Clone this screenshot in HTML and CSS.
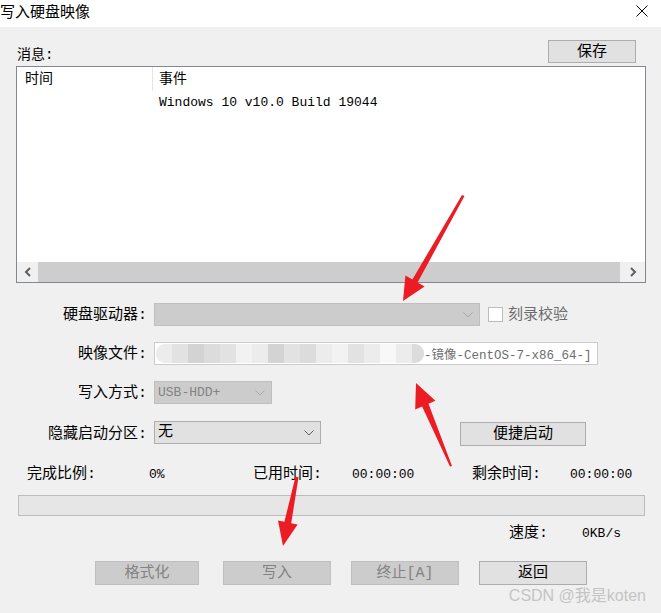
FILE: index.html
```html
<!DOCTYPE html>
<html lang="zh-CN">
<head>
<meta charset="utf-8">
<title>写入硬盘映像</title>
<link rel="stylesheet" href="styles.css">
</head>
<body>
<div class="window">
  <div class="titlebar">
    <span class="title">写入硬盘映像</span>
    <svg class="close" width="12" height="12" viewBox="0 0 12 12"><path d="M0.5 0.5 L11.5 11.5 M11.5 0.5 L0.5 11.5" stroke="#000" stroke-width="1" fill="none"/></svg>
  </div>

  <div class="msg-head">
    <span class="msg-label">消息:</span>
    <button class="btn">保存</button>
  </div>

  <div class="list">
    <div class="list-header">
      <div class="col col-time">时间</div>
      <div class="col col-event">事件</div>
    </div>
    <div class="list-body">
      <div class="list-row">
        <div class="cell-time"></div>
        <div class="cell-event mono">Windows 10 v10.0 Build 19044</div>
      </div>
    </div>
    <div class="hscroll">
      <div class="sb-btn sb-left"><svg width="8" height="10" viewBox="0 0 8 10"><path d="M6 1 L2 5 L6 9" stroke="#606060" stroke-width="2" fill="none"/></svg></div>
      <div class="sb-thumb"></div>
      <div class="sb-btn sb-right"><svg width="8" height="10" viewBox="0 0 8 10"><path d="M2 1 L6 5 L2 9" stroke="#606060" stroke-width="2" fill="none"/></svg></div>
    </div>
  </div>

  <div class="form">
    <div class="form-row">
      <label class="flabel">硬盘驱动器:</label>
      <div class="combo disabled w-drive">
        <span class="combo-text"></span>
        <svg class="chev" width="10" height="6" viewBox="0 0 10 6"><path d="M0.5 0.5 L5 5 L9.5 0.5" stroke="#a8a8a8" fill="none"/></svg>
      </div>
      <span class="checkbox"></span>
      <span class="check-label">刻录校验</span>
    </div>
    <div class="form-row">
      <label class="flabel">映像文件:</label>
      <div class="input">
        <div class="blur">
          <span class="b1"></span><span class="b2"></span><span class="b3"></span><span class="b4"></span><span class="b2"></span><span class="b5"></span><span class="b1"></span><span class="b3"></span><span class="b2"></span><span class="b4"></span><span class="b1"></span><span class="b5"></span><span class="b2"></span><span class="b1"></span><span class="b6"></span><span class="b1"></span><span class="b4"></span>
        </div>
        <span class="input-text mono">-镜像-CentOS-7-x86_64-]</span>
      </div>
    </div>
    <div class="form-row">
      <label class="flabel">写入方式:</label>
      <div class="combo disabled w-mode">
        <span class="combo-text mono">USB-HDD+</span>
        <svg class="chev" width="10" height="6" viewBox="0 0 10 6"><path d="M0.5 0.5 L5 5 L9.5 0.5" stroke="#a8a8a8" fill="none"/></svg>
      </div>
    </div>
    <div class="form-row row-hidden">
      <label class="flabel">隐藏启动分区:</label>
      <div class="combo w-hidden">
        <span class="combo-text">无</span>
        <svg class="chev" width="10" height="6" viewBox="0 0 10 6"><path d="M0.5 0.5 L5 5 L9.5 0.5" stroke="#606060" fill="none"/></svg>
      </div>
      <button class="btn btn-quick">便捷启动</button>
    </div>
  </div>

  <div class="stats">
    <span>完成比例:</span>
    <span class="mono">0%</span>
    <span>已用时间:</span>
    <span class="mono">00:00:00</span>
    <span>剩余时间:</span>
    <span class="mono">00:00:00</span>
  </div>

  <div class="progress"></div>

  <div class="speed">
    <span class="speed-label">速度:</span>
    <span class="mono">0KB/s</span>
  </div>

  <div class="actions">
    <button class="btn disabled a1">格式化</button>
    <button class="btn disabled a2">写入</button>
    <button class="btn disabled a3">终止[A]</button>
    <button class="btn a4">返回</button>
  </div>

  <svg class="arrows" width="661" height="613" viewBox="0 0 661 613">
    <polygon fill="#ec1c24" points="462,195 464.5,196 417.6,282.5 424.6,286.4 403,301 405.4,275.6 412.4,279.5"/>
    <polygon fill="#ec1c24" points="416,383 435.4,400.8 428.5,403.7 452,466 450,466.5 422.1,406.5 415.2,409.4"/>
    <polygon fill="#ec1c24" points="295.5,476.7 298.5,477.3 291.2,523.2 297.6,524.5 283,546 278,520.5 284.4,521.8"/>
  </svg>

  <div class="watermark">CSDN @我是koten</div>
</div>
</body>
</html>
```

FILE: styles.css
```css
* {
  box-sizing: border-box;
}

html, body {
  margin: 0;
  padding: 0;
}

body {
  background: #f0f0f0;
  font-family: "Liberation Mono", "Noto Sans CJK SC", monospace;
  font-size: 15px;
  color: #000;
}

.window {
  position: relative;
  width: 661px;
  height: 613px;
  overflow: hidden;
  background: #f0f0f0;
}

.mono {
  font-family: "Liberation Mono", "Noto Sans CJK SC", monospace;
  font-size: 13px;
}

.titlebar {
  height: 27px;
  background: #ffffff;
  display: flex;
  align-items: center;
  justify-content: space-between;
  padding-right: 13px;
}

.title {
  font-family: "Noto Sans CJK SC", sans-serif;
  font-size: 15px;
  line-height: 20px;
  margin-top: -5px;
  color: #000;
}

.close {
  display: block;
  margin-top: -5px;
}

.msg-head {
  display: flex;
  justify-content: space-between;
  align-items: flex-end;
  height: 23px;
  margin: 13px 25px 3px 17px;
}

.msg-label {
  font-size: 14px;
  line-height: 16px;
}

.btn {
  font-family: "Liberation Mono", "Noto Sans CJK SC", monospace;
  font-size: 15px;
  background: #e1e1e1;
  border: 1px solid #adadad;
  color: #000;
  height: 23px;
  width: 88px;
  padding: 2px 0 0 0;
  line-height: 20px;
  border-radius: 0;
}

.btn.disabled {
  background: #cccccc;
  border-color: #bfbfbf;
  color: #838383;
}

.list {
  margin-left: 16px;
  width: 630px;
  height: 217px;
  border: 1px solid #828790;
  background: #ffffff;
  display: flex;
  flex-direction: column;
}

.list-header {
  display: flex;
  height: 25px;
  flex: none;
  font-size: 14px;
}

.col {
  line-height: 25px;
}

.col-time {
  width: 136px;
  padding-left: 8px;
  border-right: 1px solid #e5e5e5;
  height: 24px;
}

.col-event {
  padding-left: 6px;
}

.list-body {
  flex: 1;
}

.list-row {
  display: flex;
  height: 20px;
  align-items: center;
}

.cell-time {
  width: 142px;
}

.cell-event {
  white-space: pre;
}

.hscroll {
  flex: none;
  height: 20px;
  display: flex;
  background: #f0f0f0;
}

.sb-btn {
  display: flex;
  align-items: center;
  justify-content: center;
  background: #f0f0f0;
}

.sb-left {
  width: 21px;
}

.sb-right {
  width: 25px;
}

.sb-thumb {
  flex: 1;
  background: #cdcdcd;
}

.form {
  margin-top: 20px;
  display: flex;
  flex-direction: column;
  gap: 16px;
}

.form-row {
  display: flex;
  align-items: center;
  height: 23px;
}

.row-hidden {
  margin-top: 1px;
  height: 25px;
  align-items: flex-start;
}

.flabel {
  width: 147px;
  text-align: right;
  margin-right: 7px;
  line-height: 20px;
  padding-top: 2px;
}

.row-hidden .flabel {
  line-height: 23px;
}

.combo {
  height: 23px;
  display: flex;
  align-items: center;
  justify-content: space-between;
  padding: 0 6px 0 3px;
  background: #e1e1e1;
  border: 1px solid #adadad;
}

.combo.disabled {
  background: #cccccc;
  border-color: #bfbfbf;
  color: #838383;
}

.combo-text {
  line-height: 20px;
  padding-top: 1px;
}

.chev {
  display: block;
}

.w-drive {
  width: 326px;
}

.w-mode {
  width: 118px;
}

.w-hidden {
  width: 167px;
}

.checkbox {
  width: 15px;
  height: 15px;
  border: 1px solid #bcbcbc;
  background: #ffffff;
  margin-left: 8px;
}

.check-label {
  margin-left: 5px;
  color: #6d6d6d;
  line-height: 20px;
  padding-top: 2px;
}

.input {
  width: 444px;
  height: 23px;
  background: #ffffff;
  border: 1px solid #cccccc;
  display: flex;
  align-items: center;
  overflow: hidden;
  padding-left: 1px;
}

.blur {
  display: flex;
  flex: none;
  height: 19px;
  width: 268px;
  border-radius: 9px;
  overflow: hidden;
}

.blur span {
  width: 16px;
  height: 19px;
  flex: none;
}

.blur .b1 { background: #ececec; }
.blur .b2 { background: #e2e2e2; }
.blur .b3 { background: #d3d3d3; }
.blur .b4 { background: #dcdcdc; }
.blur .b5 { background: #f2f2f2; }
.blur .b6 { background: #f8f8f8; }

.input-text {
  color: #6d6d6d;
  white-space: nowrap;
  flex: none;
  font-size: 12.5px;
}

.btn-quick {
  margin-left: 139px;
  margin-top: 1px;
  width: 126px;
  height: 24px;
}

.stats {
  margin-top: 21px;
  padding-left: 27px;
  height: 16px;
  line-height: 16px;
  display: grid;
  grid-template-columns: 122px 104px 99px 120px 98px auto;
  align-items: center;
}

.progress {
  margin-top: 12px;
  margin-left: 18px;
  width: 627px;
  height: 21px;
  background: #e6e6e6;
  border: 1px solid #bcbcbc;
}

.speed {
  margin-top: 10px;
  padding-left: 509px;
  height: 16px;
  line-height: 16px;
  display: flex;
  align-items: center;
}

.speed-label {
  width: 73px;
}

.actions {
  margin-top: 19px;
  padding-left: 95px;
  display: flex;
  gap: 20px;
}

.actions .btn {
  height: 24px;
  width: 108px;
}

.actions .a1 {
  width: 104px;
  margin-right: 4px;
}

.arrows {
  position: absolute;
  left: 0;
  top: 0;
  pointer-events: none;
}

.watermark {
  position: absolute;
  right: 15px;
  top: 586px;
  font-family: "Liberation Sans", "Noto Sans CJK SC", sans-serif;
  font-size: 16px;
  color: #c4c4c4;
  line-height: 20px;
}
```
